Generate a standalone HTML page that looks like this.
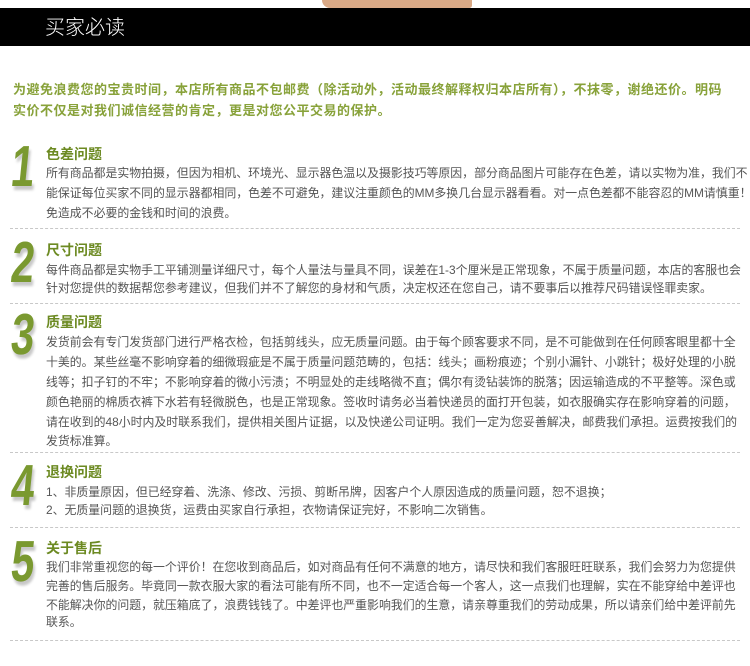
<!DOCTYPE html>
<html><head><meta charset="utf-8"><style>
*{margin:0;padding:0}
body{width:750px;height:666px;background:#fff;position:relative;overflow:hidden;font-family:"Liberation Sans","Noto Sans CJK SC",sans-serif}
.a{position:absolute;white-space:nowrap}
.bar{position:absolute;left:0;top:8px;width:750px;height:38px;background:#000}
.h{position:absolute;left:45px;top:5px;color:#fff;font-size:20px;line-height:26px;font-family:"Noto Sans CJK SC",sans-serif;font-weight:300}
.intro{color:#88a23a;font-size:13px;font-weight:bold;letter-spacing:0.5px;left:13px}
.t{left:46px;color:#6c8a22;font-size:14px;font-weight:bold;line-height:16px}
.l{left:46px;color:#555;font-size:11.9px;line-height:16px}
.d{position:absolute;left:10px;width:730px;border-top:1px dashed #c8c8c8}
.n{position:absolute;left:14px;font-size:58px;font-weight:bold;color:#7a9930;line-height:50px;font-family:"Liberation Sans",sans-serif;transform:scaleX(0.72) skewX(-8deg);transform-origin:left top;text-shadow:3px 4px 3px rgba(0,0,0,.22)}
</style></head><body>
<div style="position:absolute;left:322px;top:0;width:150px;height:8px;background:#d9a986;border-radius:0 0 10px 30px"></div>
<div class="bar"><div class="h">买家必读</div></div>

<div class="a intro" style="top:79px">为避免浪费您的宝贵时间，本店所有商品不包邮费（除活动外，活动最终解释权归本店所有），不抹零，谢绝还价。明码</div>
<div class="a intro" style="top:100px">实价不仅是对我们诚信经营的肯定，更是对您公平交易的保护。</div>

<div class="n" style="top:142px">1</div>
<div class="a t" style="top:146px">色差问题</div>
<div class="a l" style="top:165px">所有商品都是实物拍摄，但因为相机、环境光、显示器色温以及摄影技巧等原因，部分商品图片可能存在色差，请以实物为准，我们不</div>
<div class="a l" style="top:185px">能保证每位买家不同的显示器都相同，色差不可避免，建议注重颜色的MM多换几台显示器看看。对一点色差都不能容忍的MM请慎重！以</div>
<div class="a l" style="top:205px">免造成不必要的金钱和时间的浪费。</div>
<div class="d" style="top:228px"></div>

<div class="n" style="top:238px">2</div>
<div class="a t" style="top:242px">尺寸问题</div>
<div class="a l" style="top:262px">每件商品都是实物手工平铺测量详细尺寸，每个人量法与量具不同，误差在1-3个厘米是正常现象，不属于质量问题，本店的客服也会</div>
<div class="a l" style="top:280px">针对您提供的数据帮您参考建议，但我们并不了解您的身材和气质，决定权还在您自己，请不要事后以推荐尺码错误怪罪卖家。</div>
<div class="d" style="top:303px"></div>

<div class="n" style="top:310px">3</div>
<div class="a t" style="top:314px">质量问题</div>
<div class="a l" style="top:334px">发货前会有专门发货部门进行严格衣检，包括剪线头，应无质量问题。由于每个顾客要求不同，是不可能做到在任何顾客眼里都十全</div>
<div class="a l" style="top:354px">十美的。某些丝毫不影响穿着的细微瑕疵是不属于质量问题范畴的，包括：线头；画粉痕迹；个别小漏针、小跳针；极好处理的小脱</div>
<div class="a l" style="top:374px">线等；扣子钉的不牢；不影响穿着的微小污渍；不明显处的走线略微不直；偶尔有烫钻装饰的脱落；因运输造成的不平整等。深色或</div>
<div class="a l" style="top:394px">颜色艳丽的棉质衣裤下水若有轻微脱色，也是正常现象。签收时请务必当着快递员的面打开包装，如衣服确实存在影响穿着的问题，</div>
<div class="a l" style="top:414px">请在收到的48小时内及时联系我们，提供相关图片证据，以及快递公司证明。我们一定为您妥善解决，邮费我们承担。运费按我们的</div>
<div class="a l" style="top:433px">发货标准算。</div>
<div class="d" style="top:452px"></div>

<div class="n" style="top:461px">4</div>
<div class="a t" style="top:464px">退换问题</div>
<div class="a l" style="top:484px">1、非质量原因，但已经穿着、洗涤、修改、污损、剪断吊牌，因客户个人原因造成的质量问题，恕不退换；</div>
<div class="a l" style="top:502px">2、无质量问题的退换货，运费由买家自行承担，衣物请保证完好，不影响二次销售。</div>
<div class="d" style="top:527px"></div>

<div class="n" style="top:537px">5</div>
<div class="a t" style="top:540px">关于售后</div>
<div class="a l" style="top:559px">我们非常重视您的每一个评价！在您收到商品后，如对商品有任何不满意的地方，请尽快和我们客服旺旺联系，我们会努力为您提供</div>
<div class="a l" style="top:578px">完善的售后服务。毕竟同一款衣服大家的看法可能有所不同，也不一定适合每一个客人，这一点我们也理解，实在不能穿给中差评也</div>
<div class="a l" style="top:597px">不能解决你的问题，就压箱底了，浪费钱钱了。中差评也严重影响我们的生意，请亲尊重我们的劳动成果，所以请亲们给中差评前先</div>
<div class="a l" style="top:614px">联系。</div>
<div class="d" style="top:640px"></div>
</body></html>
